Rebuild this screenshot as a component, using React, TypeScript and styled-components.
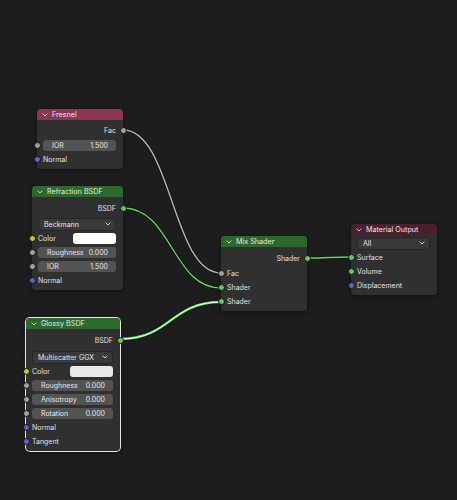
import styled, { createGlobalStyle } from "styled-components";

const GlobalStyle = createGlobalStyle`
  html, body {
    margin: 0;
    padding: 0;
    background: #1d1d1d;
  }
  body {
    font-family: Inter, "DejaVu Sans", sans-serif;
  }
`;

const SOCKET = {
  float: "#a1a1a1",
  color: "#c7c729",
  vector: "#6363c7",
  shader: "#63c763",
};

type SocketKind = keyof typeof SOCKET;

const Canvas = styled.div`
  position: relative;
  width: 457px;
  height: 500px;
  overflow: hidden;
  background-color: #1d1d1d;
  background-image: radial-gradient(circle, #222222 0.6px, transparent 1px);
  background-size: 24px 24px;
  background-position: 6px 10px;
`;

const Links = styled.svg`
  position: absolute;
  inset: 0;
  width: 457px;
  height: 500px;
`;

const Node = styled.div<{ $x: number; $y: number; $w: number; $selected?: boolean }>`
  position: absolute;
  left: ${(p) => p.$x}px;
  top: ${(p) => p.$y}px;
  width: ${(p) => p.$w}px;
  background: #303030;
  border-radius: 4px;
  box-shadow: 0 0 0 1px ${(p) => (p.$selected ? "#e6e6e6" : "#171717")},
    0 2px 5px rgba(0, 0, 0, 0.35);
  color: #e0e0e0;
  font-size: 7px;
  line-height: 1;
`;

const Header = styled.div<{ $bg: string }>`
  height: 11px;
  display: flex;
  align-items: center;
  gap: 4px;
  padding-left: 5px;
  background: ${(p) => p.$bg};
  border-radius: 4px 4px 0 0;
  color: #e8e8e8;
  font-size: 7.2px;
`;

const Body = styled.div<{ $top?: number }>`
  padding: ${(p) => p.$top ?? 4}px 0 3px;
`;

const Row = styled.div<{ $out?: boolean; $gap?: number }>`
  position: relative;
  height: 14px;
  display: flex;
  align-items: center;
  justify-content: ${(p) => (p.$out ? "flex-end" : "flex-start")};
  padding: 0 7px 0 6px;
  margin-top: ${(p) => p.$gap ?? 0}px;
`;

const Socket = styled.span<{ $kind: SocketKind; $right?: boolean }>`
  position: absolute;
  top: 50%;
  ${(p) => (p.$right ? "right: -3.5px;" : "left: -3.5px;")}
  width: 5px;
  height: 5px;
  margin-top: -3.5px;
  border-radius: 50%;
  background: ${(p) => SOCKET[p.$kind]};
  border: 1px solid #141414;
`;

const Field = styled.div`
  flex: 1;
  height: 11px;
  display: flex;
  align-items: center;
  justify-content: space-between;
  padding: 0 8px 0 9px;
  background: #535353;
  border-radius: 3px;
  color: #e6e6e6;
`;

const Dropdown = styled.div`
  flex: 1;
  height: 11px;
  display: flex;
  align-items: center;
  justify-content: space-between;
  padding: 0 4px 0 5px;
  background: #393939;
  border: 1px solid #262626;
  border-radius: 3px;
  color: #e6e6e6;
`;

const Label = styled.span`
  flex: 1;
`;

const Swatch = styled.span<{ $bg: string }>`
  width: 43px;
  height: 11px;
  border-radius: 3px;
  background: ${(p) => p.$bg};
`;

const Chevron = ({ size = 6 }: { size?: number }) => (
  <svg width={size} height={size * 0.6} viewBox="0 0 10 6">
    <path d="M1 1 L5 5 L9 1" fill="none" stroke="#d8d8d8" strokeWidth="1.6" />
  </svg>
);

type NodeRow =
  | { t: "out"; label: string; kind: SocketKind }
  | { t: "in"; label: string; kind: SocketKind; gap?: number }
  | { t: "slider"; label: string; value: string; gap?: number }
  | { t: "menu"; label: string; gap?: number }
  | { t: "color"; swatch: string };

type NodeDef = {
  title: string;
  header: string;
  x: number;
  y: number;
  w: number;
  top?: number;
  selected?: boolean;
  rows: NodeRow[];
};

const nodes: NodeDef[] = [
  {
    title: "Fresnel",
    header: "#8a3654",
    x: 37,
    y: 109,
    w: 86,
    top: 3,
    rows: [
      { t: "out", label: "Fac", kind: "float" },
      { t: "slider", label: "IOR", value: "1.500", gap: 1 },
      { t: "in", label: "Normal", kind: "vector" },
    ],
  },
  {
    title: "Refraction BSDF",
    header: "#2d682d",
    x: 32,
    y: 186,
    w: 91,
    rows: [
      { t: "out", label: "BSDF", kind: "shader" },
      { t: "menu", label: "Beckmann", gap: 2 },
      { t: "color", swatch: "#ffffff" },
      { t: "slider", label: "Roughness", value: "0.000" },
      { t: "slider", label: "IOR", value: "1.500" },
      { t: "in", label: "Normal", kind: "vector" },
    ],
  },
  {
    title: "Glossy BSDF",
    header: "#2d682d",
    x: 26,
    y: 318,
    w: 94,
    selected: true,
    rows: [
      { t: "out", label: "BSDF", kind: "shader" },
      { t: "menu", label: "Multiscatter GGX", gap: 3 },
      { t: "color", swatch: "#e8e8e8" },
      { t: "slider", label: "Roughness", value: "0.000" },
      { t: "slider", label: "Anisotropy", value: "0.000" },
      { t: "slider", label: "Rotation", value: "0.000" },
      { t: "in", label: "Normal", kind: "vector" },
      { t: "in", label: "Tangent", kind: "vector" },
    ],
  },
  {
    title: "Mix Shader",
    header: "#2d682d",
    x: 221,
    y: 236,
    w: 86,
    rows: [
      { t: "out", label: "Shader", kind: "shader" },
      { t: "in", label: "Fac", kind: "float", gap: 1 },
      { t: "in", label: "Shader", kind: "shader" },
      { t: "in", label: "Shader", kind: "shader" },
    ],
  },
  {
    title: "Material Output",
    header: "#4b1f2e",
    x: 351,
    y: 224,
    w: 86,
    top: 1,
    rows: [
      { t: "menu", label: "All" },
      { t: "in", label: "Surface", kind: "shader" },
      { t: "in", label: "Volume", kind: "shader" },
      { t: "in", label: "Displacement", kind: "vector" },
    ],
  },
];

const links = [
  { from: [123, 130], to: [221, 273], color: "#b4b4b4" },
  { from: [123, 208], to: [221, 288], color: "#62d862" },
  { from: [120, 339], to: [221, 302], color: "#62d862", selected: true },
  { from: [307, 258], to: [351, 257], color: "#62d862" },
];

const curve = (a: number[], b: number[]) => {
  const h = Math.abs(b[0] - a[0]) * 0.5;
  return `M${a[0]} ${a[1]} C${a[0] + h} ${a[1]} ${b[0] - h} ${b[1]} ${b[0]} ${b[1]}`;
};

const renderRow = (row: NodeRow, i: number) => {
  switch (row.t) {
    case "out":
      return (
        <Row key={i} $out>
          {row.label}
          <Socket $kind={row.kind} $right />
        </Row>
      );
    case "in":
      return (
        <Row key={i} $gap={row.gap}>
          <Socket $kind={row.kind} />
          {row.label}
        </Row>
      );
    case "slider":
      return (
        <Row key={i} $gap={row.gap}>
          <Socket $kind="float" />
          <Field>
            <span>{row.label}</span>
            <span>{row.value}</span>
          </Field>
        </Row>
      );
    case "menu":
      return (
        <Row key={i} $gap={row.gap}>
          <Dropdown>
            <span>{row.label}</span>
            <Chevron size={6} />
          </Dropdown>
        </Row>
      );
    case "color":
      return (
        <Row key={i}>
          <Socket $kind="color" />
          <Label>Color</Label>
          <Swatch $bg={row.swatch} />
        </Row>
      );
  }
};

export default function App() {
  return (
    <Canvas>
      <GlobalStyle />
      <Links viewBox="0 0 457 500">
        {links.map((l, i) => (
          <g key={i} fill="none">
            <path d={curve(l.from, l.to)} stroke="#121212" strokeWidth={l.selected ? 3.6 : 3} />
            <path d={curve(l.from, l.to)} stroke={l.color} strokeWidth={l.selected ? 2.4 : 1.4} />
            {l.selected && <path d={curve(l.from, l.to)} stroke="#f2fff2" strokeWidth={1} />}
          </g>
        ))}
      </Links>
      {nodes.map((n) => (
        <Node key={n.title} $x={n.x} $y={n.y} $w={n.w} $selected={n.selected}>
          <Header $bg={n.header}>
            <Chevron size={6} />
            {n.title}
          </Header>
          <Body $top={n.top}>{n.rows.map(renderRow)}</Body>
        </Node>
      ))}
    </Canvas>
  );
}
